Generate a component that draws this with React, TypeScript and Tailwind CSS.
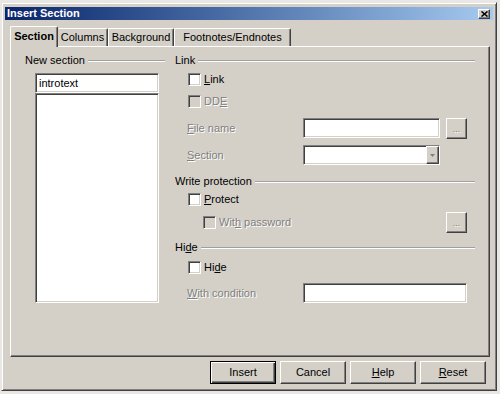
import React from 'react';

// classic 3D edges
const sunken =
  'border border-t-[#808080] border-l-[#808080] border-r-white border-b-white shadow-[inset_1px_1px_0_#404040,inset_-1px_-1px_0_#d4d0c8]';
const raised =
  'border border-t-white border-l-white border-r-[#404040] border-b-[#404040] shadow-[inset_-1px_-1px_0_#808080]';
const disabledText = 'text-[#808080] [text-shadow:1px_1px_0_#fff]';

function U({ children }: { children: React.ReactNode }) {
  return <span className="underline underline-offset-[1px]">{children}</span>;
}

function Header({ children }: { children: React.ReactNode }) {
  return (
    <div className="flex items-center h-[13px]">
      <span className="whitespace-nowrap">{children}</span>
      <div className="flex-1 ml-[3px] h-[2px] border-t border-t-[#a0a0a0] border-b border-b-white" />
    </div>
  );
}

function Checkbox({ disabled }: { disabled?: boolean }) {
  return (
    <div
      className={`w-[13px] h-[13px] shrink-0 ${sunken} ${
        disabled ? 'bg-[#d4d0c8]' : 'bg-white'
      }`}
    />
  );
}

function CheckRow({
  label,
  disabled,
  indent,
  className = '',
  right,
}: {
  label: React.ReactNode;
  disabled?: boolean;
  indent: string;
  className?: string;
  right?: React.ReactNode;
}) {
  return (
    <div className={`flex items-center ${indent} ${className}`}>
      <Checkbox disabled={disabled} />
      <span className={`ml-[3px] whitespace-nowrap ${disabled ? disabledText : ''}`}>{label}</span>
      {right}
    </div>
  );
}

function DotsButton() {
  return (
    <div
      className={`ml-auto mr-[8px] w-[21px] h-[21px] bg-[#d4d0c8] flex items-center justify-center ${raised}`}
    >
      <span className={`text-[9px] leading-[9px] pt-[3px] ${disabledText}`}>...</span>
    </div>
  );
}

function DialogButton({
  children,
  isDefault,
}: {
  children: React.ReactNode;
  isDefault?: boolean;
}) {
  return (
    <button
      className={`w-[66px] h-[23px] bg-[#d4d0c8] flex items-center justify-center ${
        isDefault
          ? 'border border-black shadow-[inset_1px_1px_0_#fff,inset_-1px_-1px_0_#404040,inset_-2px_-2px_0_#808080]'
          : raised
      }`}
    >
      {children}
    </button>
  );
}

export default function App() {
  return (
    <div className="w-[500px] h-[394px] bg-[#e9e7e3] pl-[1px] pt-[2px] overflow-hidden font-['Liberation_Sans',Arial,sans-serif] text-[11px] leading-[13px] text-black">
      <div className="w-[496px] h-[389px] bg-[#d4d0c8] border border-t-[#e9e7e3] border-l-[#e9e7e3] border-r-[#404040] border-b-[#404040] shadow-[inset_1px_1px_0_#fff,inset_-1px_-1px_0_#808080] px-[3px] pt-[4px] flex flex-col">
        {/* title bar */}
        <div className="h-[13px] flex items-center justify-between pl-[2px] pr-[3px] bg-linear-to-r from-[#0a246a] to-[#a6caf0]">
          <span className="text-white font-bold">Insert Section</span>
          <div className={`w-[12px] h-[10px] bg-[#d4d0c8] flex items-center justify-center ${raised}`}>
            <svg width="7" height="6" viewBox="0 0 7 6">
              <path d="M0.5 0.5 L6.5 5.5 M6.5 0.5 L0.5 5.5" stroke="#000" strokeWidth="1.6" />
            </svg>
          </div>
        </div>

        {/* tabs */}
        <div className="mt-[6px] ml-[5px] h-[20px] flex items-end">
          <div className="relative z-10 -mb-px w-[48px] h-[21px] bg-[#d4d0c8] border-l border-t border-white border-r border-r-[#404040] rounded-t-[2px] shadow-[inset_-1px_0_0_#808080] flex items-center justify-center font-bold pb-[1px]">
            Section
          </div>
          <div className="w-[50px] h-[18px] border-t border-t-white border-r border-r-[#404040] shadow-[inset_-1px_0_0_#808080] rounded-t-[2px] flex items-center justify-center">
            Columns
          </div>
          <div className="w-[66px] h-[18px] border-l border-l-white border-t border-t-white border-r border-r-[#404040] shadow-[inset_-1px_0_0_#808080] rounded-t-[2px] flex items-center justify-center">
            Background
          </div>
          <div className="w-[117px] h-[18px] border-l border-l-white border-t border-t-white border-r border-r-[#404040] shadow-[inset_-1px_0_0_#808080] rounded-t-[2px] flex items-center justify-center">
            Footnotes/Endnotes
          </div>
        </div>

        {/* tab panel */}
        <div className="ml-[5px] w-[480px] h-[311px] border border-t-white border-l-white border-r-[#404040] border-b-[#404040] shadow-[inset_-1px_-1px_0_#808080] flex pl-[14px] pt-[7px]">
          {/* left column */}
          <div className="w-[140px] flex flex-col">
            <Header>New section</Header>
            <div className={`ml-[10px] mt-[6px] w-[124px] h-[20px] bg-white px-[3px] flex items-center ${sunken}`}>
              introtext
            </div>
            <div className={`ml-[10px] w-[124px] h-[210px] bg-white ${sunken}`} />
          </div>

          {/* right column */}
          <div className="ml-[10px] w-[300px] flex flex-col">
            <Header>Link</Header>
            <CheckRow indent="ml-[13px]" className="mt-[6px] h-[13px]" label={<><U>L</U>ink</>} />
            <CheckRow indent="ml-[13px]" className="mt-[9px] h-[13px]" disabled label={<>DD<U>E</U></>} />

            <div className="mt-[9px] h-[22px] flex items-center pl-[12px]">
              <span className={`w-[116px] ${disabledText}`}>
                <U>F</U>ile name
              </span>
              <div className={`w-[137px] h-[20px] bg-white ${sunken}`} />
              <div className={`ml-[6px] w-[21px] h-[21px] bg-[#d4d0c8] flex items-center justify-center ${raised}`}>
                <span className={`text-[9px] leading-[9px] pt-[3px] ${disabledText}`}>...</span>
              </div>
            </div>

            <div className="mt-[6px] h-[20px] flex items-center pl-[12px]">
              <span className={`w-[116px] ${disabledText}`}>
                <U>S</U>ection
              </span>
              <div className={`w-[137px] h-[20px] bg-white flex justify-end ${sunken}`}>
                <div className={`w-[13px] h-full bg-[#d4d0c8] flex items-center justify-center ${raised}`}>
                  <svg width="5" height="3" viewBox="0 0 5 3">
                    <path d="M0 0 H5 L2.5 3 Z" fill="#808080" />
                  </svg>
                </div>
              </div>
            </div>

            <div className="mt-[10px]">
              <Header>Write protection</Header>
            </div>
            <CheckRow indent="ml-[13px]" className="mt-[5px] h-[13px]" label={<><U>P</U>rotect</>} />
            <CheckRow
              indent="ml-[28px]"
              className="mt-[5px] h-[22px]"
              disabled
              label={<>Wit<U>h</U> password</>}
              right={<DotsButton />}
            />

            <div className="mt-[8px]">
              <Header>
                Hi<U>d</U>e
              </Header>
            </div>
            <CheckRow indent="ml-[13px]" className="mt-[7px] h-[13px]" label={<>Hi<U>d</U>e</>} />

            <div className="mt-[9px] h-[20px] flex items-center pl-[12px]">
              <span className={`w-[116px] ${disabledText}`}>
                <U>W</U>ith condition
              </span>
              <div className={`w-[164px] h-[20px] bg-white ${sunken}`} />
            </div>
          </div>
        </div>

        {/* dialog buttons */}
        <div className="mt-[4px] flex justify-end gap-[4px] pr-[7px]">
          <DialogButton isDefault>Insert</DialogButton>
          <DialogButton>Cancel</DialogButton>
          <DialogButton>
            <U>H</U>elp
          </DialogButton>
          <DialogButton>
            <U>R</U>eset
          </DialogButton>
        </div>
      </div>
    </div>
  );
}
